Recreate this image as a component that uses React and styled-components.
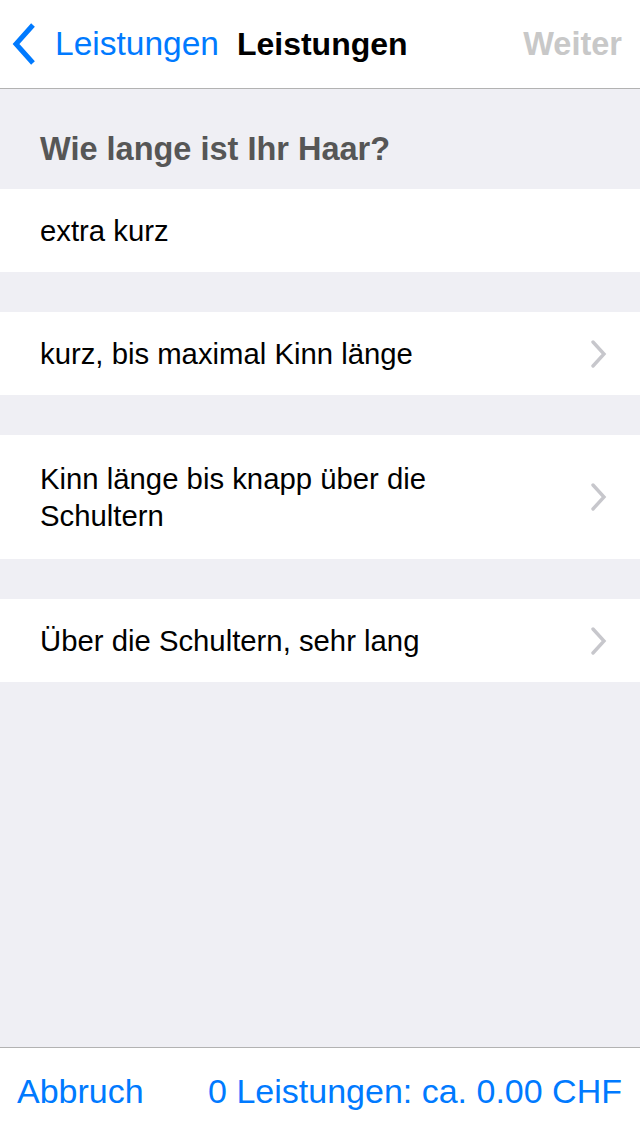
import React from "react";
import styled, { createGlobalStyle } from "styled-components";

const Global = createGlobalStyle`
  html, body { margin: 0; padding: 0; background: #efeff4; }
  body { font-family: "Liberation Sans", Arial, sans-serif; -webkit-font-smoothing: antialiased; }
  * { box-sizing: border-box; }
`;

const Screen = styled.div`
  width: 640px;
  height: 1136px;
  display: flex;
  flex-direction: column;
  background: #efeff4;
  overflow: hidden;
`;

const NavBar = styled.header`
  height: 89px;
  flex: none;
  background: #ffffff;
  border-bottom: 1px solid #b2b2b2;
  display: flex;
  align-items: center;
  padding: 0 18px 0 12px;
`;

const BackButton = styled.div`
  display: flex;
  align-items: center;
  gap: 19px;
  color: #007aff;
  font-size: 33.5px;
`;

const Title = styled.div`
  margin-left: 18px;
  font-weight: bold;
  font-size: 32px;
  color: #000;
`;

const NavAction = styled.div`
  margin-left: auto;
  font-weight: bold;
  font-size: 32.5px;
  color: #c8c8c8;
`;

const Content = styled.main`
  flex: 1;
  display: flex;
  flex-direction: column;
`;

const SectionHeader = styled.div`
  height: 100px;
  display: flex;
  align-items: center;
  padding: 20px 40px 0;
  font-weight: bold;
  font-size: 32.5px;
  color: #565656;
`;

const List = styled.div`
  display: flex;
  flex-direction: column;
  gap: 40px;
`;

const Row = styled.div`
  background: #fff;
  min-height: 83px;
  display: flex;
  align-items: center;
  padding: ${(p) => (p.$multi ? "25px" : "0")} 32px ${(p) => (p.$multi ? "25px" : "0")} 40px;
`;

const RowText = styled.div`
  flex: 1;
  font-size: 29.3px;
  line-height: 37px;
  color: #000;
  padding-right: 60px;
`;

const Toolbar = styled.footer`
  height: 89px;
  flex: none;
  background: #fff;
  border-top: 1px solid #b2b2b2;
  display: flex;
  align-items: center;
  justify-content: space-between;
  padding: 0 18px 0 17px;
  font-size: 34px;
  color: #007aff;
`;

const ToolbarItem = styled.div`
  padding-bottom: 2px;
`;

const BackChevron = () => (
  <svg width="24" height="44" viewBox="0 0 24 44">
    <path d="M21 3 L4 22 L21 41" fill="none" stroke="#007aff" strokeWidth="5" strokeLinecap="butt" strokeLinejoin="miter" />
  </svg>
);

const Disclosure = () => (
  <svg width="18" height="28" viewBox="0 0 18 28">
    <path d="M3 2 L14 14 L3 26" fill="none" stroke="#c7c7cc" strokeWidth="3.4" strokeLinecap="round" strokeLinejoin="miter" />
  </svg>
);

const items = [
  { label: "extra kurz", chevron: false },
  { label: "kurz, bis maximal Kinn länge", chevron: true },
  { label: "Kinn länge bis knapp über die Schultern", chevron: true, multi: true },
  { label: "Über die Schultern, sehr lang", chevron: true },
];

export default function App() {
  return (
    <>
      <Global />
      <Screen>
        <NavBar>
          <BackButton>
            <BackChevron />
            <span>Leistungen</span>
          </BackButton>
          <Title>Leistungen</Title>
          <NavAction>Weiter</NavAction>
        </NavBar>
        <Content>
          <SectionHeader>Wie lange ist Ihr Haar?</SectionHeader>
          <List>
            {items.map((it) => (
              <Row key={it.label} $multi={it.multi}>
                <RowText>{it.label}</RowText>
                {it.chevron && <Disclosure />}
              </Row>
            ))}
          </List>
        </Content>
        <Toolbar>
          <ToolbarItem>Abbruch</ToolbarItem>
          <ToolbarItem>0 Leistungen: ca. 0.00 CHF</ToolbarItem>
        </Toolbar>
      </Screen>
    </>
  );
}
